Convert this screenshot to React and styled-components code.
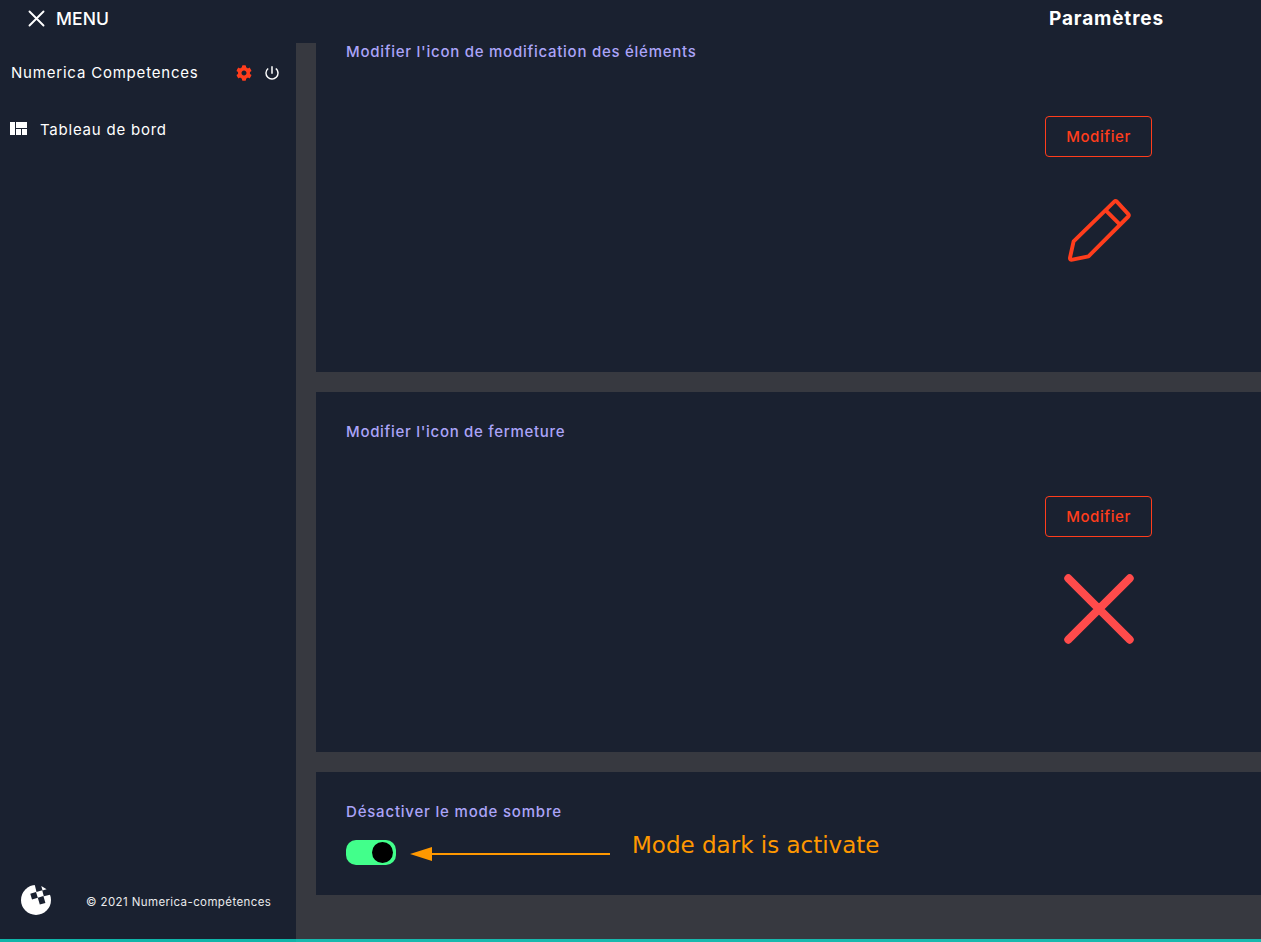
import React from "react";
import styled, { createGlobalStyle } from "styled-components";
import { FaCog } from "react-icons/fa";
import { MdPowerSettingsNew } from "react-icons/md";

const Global = createGlobalStyle`
  * { box-sizing: border-box; }
  body { margin: 0; overflow: hidden; background: #373940; font-family: Inter, "Liberation Sans", sans-serif; }
`;
const Page = styled.div`
  height: 942px;
  display: flex;
  flex-direction: column;
  overflow: hidden;
`;
const Header = styled.header`
  height: 43px;
  flex: none;
  position: relative;
  z-index: 1;
  display: flex;
  justify-content: space-between;
  padding: 0 97px 0 28px;
  background: #1a2130;
  color: #fff;
`;
const Menu = styled.div`
  display: flex;
  align-items: center;
  gap: 11px;
  height: 37px;
  font-size: 17.5px;
  font-weight: 500;
  letter-spacing: 0.1px;
`;
const Title = styled.h1`
  margin: 0;
  font-size: 19px;
  line-height: 37px;
  font-weight: 700;
  white-space: nowrap;
  width: 115px;
  letter-spacing: 0.85px;
`;
const Body = styled.div`
  flex: 1;
  min-height: 0;
  display: flex;
`;
const Sidebar = styled.aside`
  width: 296px;
  flex: none;
  display: flex;
  flex-direction: column;
  background: #1a2130;
  color: #fff;
`;
const User = styled.div`
  height: 60px;
  display: flex;
  align-items: center;
  padding: 0 15px 0 11px;
`;
const UserName = styled.span`
  flex: 1;
  padding-bottom: 2px;
  font-size: 15px;
  letter-spacing: 0.8px;
`;
const Gear = styled(FaCog)`
  color: #ff3d1c;
  margin-right: 11px;
`;
const NavItem = styled.a`
  height: 24px;
  margin-top: 14px;
  padding-left: 6px;
  display: flex;
  align-items: center;
  gap: 10px;
  font-size: 15px;
  letter-spacing: 0.78px;
`;
const Footer = styled.footer`
  margin-top: auto;
  height: 59px;
  padding: 5px 0 0 21px;
  display: flex;
  align-items: flex-start;
  gap: 35px;
  font-size: 11.5px;
  line-height: 34px;
  letter-spacing: 0.39px;
  white-space: nowrap;
  color: #e9eaec;
`;
const Content = styled.main`
  flex: 1;
  min-width: 0;
  display: flex;
  flex-direction: column;
  gap: 20px;
  padding-left: 20px;
  margin-top: -31px;
`;
const Card = styled.section`
  height: ${(p) => (p.$compact ? 123 : 360)}px;
  flex: none;
  padding: 30px;
  background: #1a2130;
`;
const Label = styled.h2`
  margin: 0;
  height: 19px;
  line-height: 19px;
  font-size: 15px;
  font-weight: 500;
  letter-spacing: ${(p) => p.$spacing}px;
  color: #aba4f8;
  white-space: nowrap;
`;
const Editor = styled.div`
  width: 107px;
  margin: 55px 0 0 699px;
  display: flex;
  flex-direction: column;
  align-items: center;
  gap: 33px;
`;
const Button = styled.button`
  width: 107px;
  height: 41px;
  padding: 0;
  border: 1px solid #ff3d1c;
  border-radius: 4px;
  background: transparent;
  color: #ff3d1c;
  font: 500 15px Inter, "Liberation Sans", sans-serif;
  letter-spacing: 0.58px;
`;
const ToggleRow = styled.div`
  display: flex;
  align-items: center;
  height: 25px;
  margin-top: 19px;
`;
const Toggle = styled.div`
  width: 50px;
  height: 25px;
  border-radius: 10px;
  padding: 2px 3px;
  display: flex;
  justify-content: flex-end;
  background: #42ff8b;
`;
const Knob = styled.span`
  width: 21px;
  height: 21px;
  border-radius: 50%;
  background: #000;
`;
const Arrow = styled.svg`
  margin: 3px 22px 0 14px;
`;
const Note = styled.span`
  font: 23px/25px "DejaVu Sans", sans-serif;
  margin-top: -14px;
  color: #ff9800;
  white-space: nowrap;
`;
const Strip = styled.div`
  height: 3px;
  flex: none;
  background: linear-gradient(to right, #0fb5a9 296px, #17b9ae 296px);
`;

const DashboardIcon = () => (
  <svg width="24" height="24" viewBox="0 0 24 24" fill="#fff">
    <path d="M10 18h5v-6h-5v6zm-6 0h5V5H4v13zm12 0h5v-6h-5v6zM10 5v6h11V5H10z" />
  </svg>
);
const PencilIcon = () => (
  <svg width="80" height="80" viewBox="0 -0.3 80 80" fill="none" stroke="#ff3d1c" strokeWidth="3.9" strokeLinejoin="round">
    <path d="M55.3 11.3Q56.5 10.2 57.8 11.3L69.3 23.8Q70.3 25 69.3 26.2L29.5 66L13.4 69.4Q10.6 70 11 67.4L14.6 51Z M46.7 20L61 34.4" />
  </svg>
);
const CrossIcon = () => (
  <svg width="80" height="80" viewBox="0 0 80 80" stroke="#ff4b4b" strokeWidth="8" strokeLinecap="round">
    <path d="M9.3 8.3L70.7 69.7M70.7 8.3L9.3 69.7" />
  </svg>
);
const Logo = () => (
  <svg width="30" height="30" viewBox="0 0 30 30">
    <circle cx="15" cy="15" r="15" fill="#fff" />
    <path fill="#1a2130" d="M9.3 8.7L15 7L16.8 12.8L11 14.4ZM16.8 12.8L22.4 11L24.4 18L18.8 19.6ZM13.8 0L20 0L21.3 5.2L15.5 7ZM20 0L30 0V9.5L22.8 11.2L21.2 5.2Z" />
    <path fill="#fff" d="M20.3 1L25.6 4.3L21.5 5.4Z" />
  </svg>
);

export default function App() {
  return (
    <Page>
      <Global />
      <Header>
        <Menu>
          <svg width="17" height="17" viewBox="0 0 17 17" stroke="#fff" strokeWidth="1.9" strokeLinecap="round">
            <path d="M1.5 1.5L15.5 15.5M15.5 1.5L1.5 15.5" />
          </svg>
          MENU
        </Menu>
        <Title>Paramètres</Title>
      </Header>
      <Body>
        <Sidebar>
          <User>
            <UserName>Numerica Competences</UserName>
            <Gear size={16} />
            <MdPowerSettingsNew size={18} />
          </User>
          <NavItem>
            <DashboardIcon />
            Tableau de bord
          </NavItem>
          <Footer>
            <Logo />
            © 2021 Numerica-compétences
          </Footer>
        </Sidebar>
        <Content>
          <Card>
            <Label $spacing={0.74}>Modifier l'icon de modification des éléments</Label>
            <Editor>
              <Button>Modifier</Button>
              <PencilIcon />
            </Editor>
          </Card>
          <Card>
            <Label $spacing={0.7}>Modifier l'icon de fermeture</Label>
            <Editor>
              <Button>Modifier</Button>
              <CrossIcon />
            </Editor>
          </Card>
          <Card $compact>
            <Label $spacing={0.8}>Désactiver le mode sombre</Label>
            <ToggleRow>
              <Toggle><Knob /></Toggle>
              <Arrow width="200" height="14" viewBox="0 0 200 14" fill="#ff9800">
                <path d="M0 7L22 0V6H200V8H22V14Z" />
              </Arrow>
              <Note>Mode dark is activate</Note>
            </ToggleRow>
          </Card>
        </Content>
      </Body>
      <Strip />
    </Page>
  );
}
